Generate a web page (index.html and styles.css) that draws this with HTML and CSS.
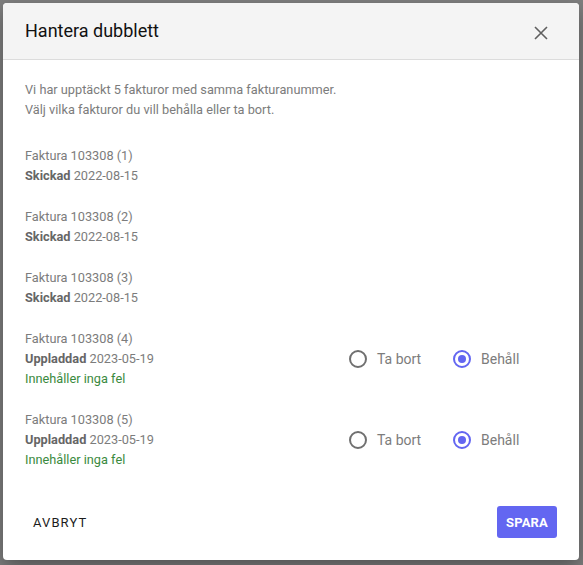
FILE: index.html
```html
<!DOCTYPE html>
<html lang="sv">
<head>
<meta charset="utf-8">
<title>Hantera dubblett</title>
<link rel="stylesheet" href="styles.css">
</head>
<body>
<div class="backdrop">
  <div class="dialog">
    <div class="dialog-header">
      <h2 class="dialog-title">Hantera dubblett</h2>
      <button class="close-btn" aria-label="Stäng">
        <svg width="14" height="14" viewBox="0 0 14 14"><path d="M1 1L13 13M13 1L1 13" stroke="#5f5f5f" stroke-width="1.6" fill="none"/></svg>
      </button>
    </div>
    <div class="dialog-body">
      <p class="intro">Vi har upptäckt 5 fakturor med samma fakturanummer.<br>Välj vilka fakturor du vill behålla eller ta bort.</p>
      <div class="items">
        <div class="item">
          <div class="item-info">
            <div>Faktura 103308 (1)</div>
            <div><b>Skickad</b> 2022-08-15</div>
          </div>
        </div>
        <div class="item">
          <div class="item-info">
            <div>Faktura 103308 (2)</div>
            <div><b>Skickad</b> 2022-08-15</div>
          </div>
        </div>
        <div class="item">
          <div class="item-info">
            <div>Faktura 103308 (3)</div>
            <div><b>Skickad</b> 2022-08-15</div>
          </div>
        </div>
        <div class="item">
          <div class="item-info">
            <div>Faktura 103308 (4)</div>
            <div><b>Uppladdad</b> 2023-05-19</div>
            <div class="ok">Innehåller inga fel</div>
          </div>
          <div class="radio-group">
            <label class="radio"><span class="radio-circle"></span><span class="radio-label">Ta bort</span></label>
            <label class="radio"><span class="radio-circle checked"></span><span class="radio-label">Behåll</span></label>
          </div>
        </div>
        <div class="item">
          <div class="item-info">
            <div>Faktura 103308 (5)</div>
            <div><b>Uppladdad</b> 2023-05-19</div>
            <div class="ok">Innehåller inga fel</div>
          </div>
          <div class="radio-group">
            <label class="radio"><span class="radio-circle"></span><span class="radio-label">Ta bort</span></label>
            <label class="radio"><span class="radio-circle checked"></span><span class="radio-label">Behåll</span></label>
          </div>
        </div>
      </div>
    </div>
    <div class="dialog-footer">
      <button class="btn-text">AVBRYT</button>
      <button class="btn-primary">SPARA</button>
    </div>
  </div>
</div>
</body>
</html>
```

FILE: styles.css
```css
* { box-sizing: border-box; }
html, body { margin: 0; padding: 0; }
body {
  width: 583px;
  height: 565px;
  background: #7f7f7f;
  font-family: Roboto, "Liberation Sans", Arial, sans-serif;
  overflow: hidden;
}
.backdrop {
  padding: 3px 4px 5px 3px;
  height: 565px;
}
.dialog {
  width: 576px;
  height: 557px;
  background: #fff;
  border-radius: 4px;
  box-shadow: 0 8px 20px rgba(0,0,0,0.35);
  display: flex;
  flex-direction: column;
  overflow: hidden;
}
.dialog-header {
  height: 57px;
  background: #f4f4f4;
  border-bottom: 1px solid #dcdcdc;
  display: flex;
  align-items: center;
  justify-content: space-between;
  padding: 0 31px 0 22px;
  flex-shrink: 0;
}
.dialog-title {
  margin: 0;
  font-size: 18px;
  font-weight: 400;
  color: #111;
  line-height: 24px;
  margin-top: -1px;
}
.close-btn {
  background: none;
  border: 0;
  padding: 0;
  width: 14px;
  height: 14px;
  display: flex;
  margin-top: 4px;
}
.dialog-body {
  padding: 20px 22px 0 22px;
  font-size: 12.75px;
  line-height: 20px;
  color: #7c7c7c;
}
.intro {
  margin: 0 0 26px 0;
}
.items {
  display: flex;
  flex-direction: column;
  gap: 21px;
}
.item {
  display: flex;
  align-items: center;
  justify-content: space-between;
}
.item b {
  font-weight: 700;
  color: #666;
}
.ok {
  color: #3a8a3e;
}
.radio-group {
  display: flex;
  width: 208px;
}
.radio {
  display: flex;
  align-items: center;
  width: 105px;
  font-size: 14px;
  color: #7c7c7c;
}
.radio-circle {
  width: 18px;
  height: 18px;
  border: 2px solid #707070;
  border-radius: 50%;
  margin-right: 10px;
  display: flex;
  align-items: center;
  justify-content: center;
}
.radio-circle.checked {
  border-color: #6366f1;
}
.radio-circle.checked::after {
  content: "";
  width: 8px;
  height: 8px;
  border-radius: 50%;
  background: #6366f1;
}
.dialog-footer {
  margin-top: auto;
  padding: 0 22px 22px 22px;
  display: flex;
  justify-content: space-between;
  align-items: center;
}
.btn-text {
  background: none;
  border: 0;
  height: 32px;
  padding: 0 8px;
  font-family: inherit;
  font-size: 13px;
  letter-spacing: 1.1px;
  color: #1c1c1c;
}
.btn-primary {
  background: #6366f1;
  border: 0;
  border-radius: 3px;
  height: 32px;
  width: 60px;
  padding: 0;
  font-family: inherit;
  font-size: 13px;
  font-weight: 700;
  color: #fff;
  letter-spacing: 0.2px;
}
```
